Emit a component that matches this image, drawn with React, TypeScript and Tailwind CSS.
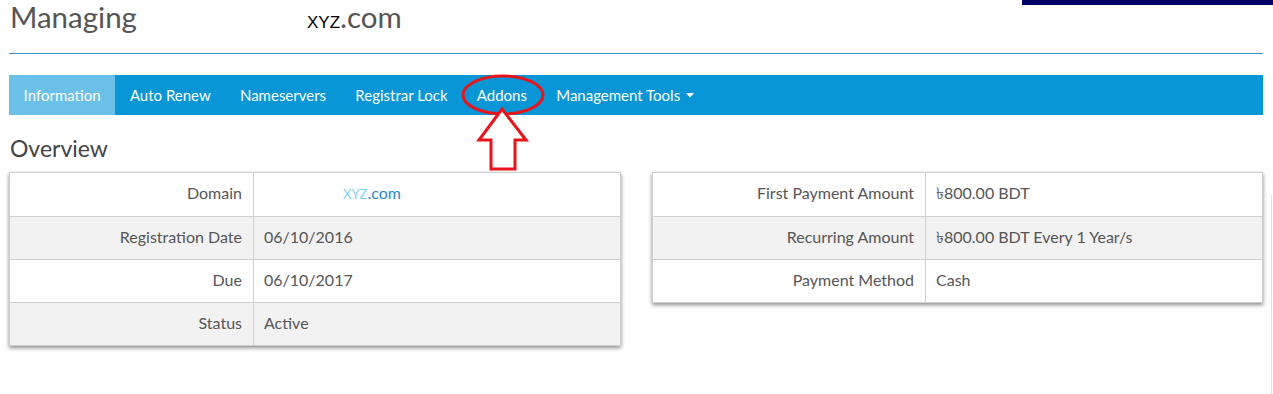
import React from "react";

const font = { fontFamily: "Lato, 'Open Sans', sans-serif" };

function Row({ label, value, shaded, labelW }: { label: string; value: React.ReactNode; shaded?: boolean; labelW: string }) {
  return (
    <div className={`flex h-[43px] border-t border-[#cfcfcf] first:border-t-0 ${shaded ? "bg-[#f2f2f2]" : "bg-white"}`}>
      <div className={`${labelW} shrink-0 flex items-center justify-end pr-[11px] pb-[3px] border-r border-[#cfcfcf] text-[#555]`}>{label}</div>
      <div className="flex items-center pl-[10px] pb-[3px] text-[#555]">{value}</div>
    </div>
  );
}

const taka = <span style={{ fontFamily: "'Noto Sans', sans-serif" }}>৳</span>;

export default function App() {
  return (
    <div className="relative w-[1273px] h-[394px] bg-white overflow-hidden text-[16px]" style={font}>
      <div className="absolute top-0 left-[1022px] w-[251px] h-[5px] bg-[#000066]" />
      <div className="absolute top-[195px] left-[1271px] w-[1px] h-[199px] bg-[#e2e2e2]" />
      <div className="pl-[9px] pr-[10px]">
        <div className="h-[53px] flex items-start pl-[1px]">
          <span className="text-[29.5px] text-[#555] leading-[33px] w-[297px]">Managing</span>
          <span className="text-[29.5px] text-[#555] leading-[33px]">
            <span className="text-[17px] text-black" style={{ fontFamily: "'Liberation Sans', sans-serif" }}>XYZ</span>.com
          </span>
        </div>
        <div className="h-px bg-[#3d94c8]" />
        <div className="mt-[21px] h-[40px] bg-[#0896d6] flex items-stretch text-white text-[15px]">
          <div className="bg-[#6ac0e6] px-[14.6px] flex items-center">Information</div>
          <div className="px-[14.6px] flex items-center">Auto Renew</div>
          <div className="px-[14.6px] flex items-center">Nameservers</div>
          <div className="px-[14.6px] flex items-center">Registrar Lock</div>
          <div className="px-[14.6px] flex items-center">Addons</div>
          <div className="px-[14.6px] flex items-center gap-[6px]">
            Management Tools
            <svg width="8" height="5" viewBox="0 0 8 5"><path d="M0 0h8L4 4.5z" fill="white" /></svg>
          </div>
        </div>
        <div className="h-[57px] flex items-center pl-[1px] pt-[10px] text-[23px] text-[#444]">Overview</div>
        <div className="flex gap-[31px] items-start">
          <div className="w-[612px] border border-[#cfcfcf] shadow-[0_2px_4px_rgba(0,0,0,0.45)]">
            <Row labelW="w-[244px]" label="Domain" value={<span className="pl-[79px] text-[#2b8bd0]"><span className="text-[#7fd3ef] text-[13px]">XYZ</span>.com</span>} />
            <Row labelW="w-[244px]" shaded label="Registration Date" value="06/10/2016" />
            <Row labelW="w-[244px]" label="Due" value="06/10/2017" />
            <Row labelW="w-[244px]" shaded label="Status" value="Active" />
          </div>
          <div className="w-[611px] border border-[#cfcfcf] shadow-[0_2px_4px_rgba(0,0,0,0.45)]">
            <Row labelW="w-[273px]" label="First Payment Amount" value={<span>{taka}800.00 BDT</span>} />
            <Row labelW="w-[273px]" shaded label="Recurring Amount" value={<span>{taka}800.00 BDT Every 1 Year/s</span>} />
            <Row labelW="w-[273px]" label="Payment Method" value="Cash" />
          </div>
        </div>
      </div>
      <svg className="absolute left-0 top-0 pointer-events-none" width="1273" height="394">
        <ellipse cx="503" cy="95" rx="40" ry="19" fill="none" stroke="#e8141c" strokeWidth="3" />
        <path d="M502 109 L526 140 L515 140 L515 169 L491 169 L491 140 L479 140 Z" fill="white" stroke="#e8141c" strokeWidth="3" strokeLinejoin="miter" />
      </svg>
    </div>
  );
}
